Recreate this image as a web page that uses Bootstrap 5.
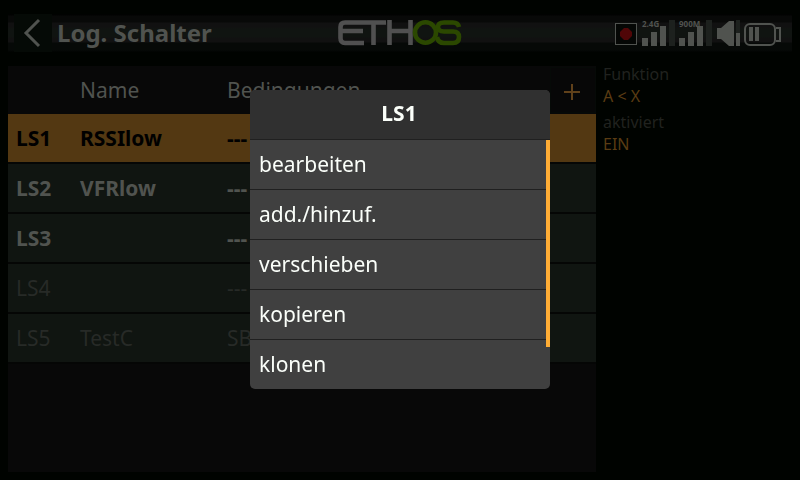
<!DOCTYPE html>
<html lang="de">
<head>
<meta charset="utf-8">
<meta name="viewport" content="width=device-width, initial-scale=1">
<title>Log. Schalter</title>
<link href="https://cdn.jsdelivr.net/npm/bootstrap@5.3.0/dist/css/bootstrap.min.css" rel="stylesheet">
<style>
  body { background: #000300; color: #50534f; font-family: "Noto Sans", sans-serif; font-size: 21px; line-height: 24px; }
  .topbar { margin-top: 14px; height: 38px; padding-left: 6px; padding-right: 7px;
    background: linear-gradient(#010201 0 1px, #080908 2px 8px, #111111 9px 13px, #101411 15px 23px, #111111 24px 28px, #060907 29px 36px, #010301); }
  .side { flex: 1 1 0; }
  .back { width: 38px; height: 38px; background: #050a06; }
  .title { font-size: 24px; line-height: 38px; margin-left: 5px; }
  .status { gap: 4px; }
  .signal { font-family: "Open Sans", sans-serif; font-size: 8px; font-weight: 700; overflow: visible; }
  .content { padding: 14px 8px 8px; }
  .listing { background: #080808; }
  .info { padding-left: 7px; font-size: 16px; line-height: 22px; margin-top: -3px; }
  .info dt { font-weight: 400; color: #20221f; }
  .info dd { color: #5a3c13; margin-bottom: 4px; }
  .switches { table-layout: fixed; border-collapse: separate; border-spacing: 0; }
  .switches th, .switches td { padding: 0 0 1px 8px; height: 50px; border-bottom: 2px solid #050605; vertical-align: middle; white-space: nowrap; background: #101511; }
  .switches thead th { height: 48px; border: 0; background: #080808; font-weight: 400; }
  .switches .selected > * { background: #533812; color: #000; }
  .switches .off > * { font-weight: 400; color: #272a27; }
  .switches thead .addcell { padding: 0; }
  .add { width: 46px; height: 46px; background: #070707; border: 1px solid #060a07; }
  .c-id { width: 64px; } .c-name { width: 147px; } .c-add { width: 46px; }
  .overlay { padding-bottom: 1px; }
  .menu { width: 300px; border-radius: 5px; overflow: hidden; background: #404040; color: #fbfffa; }
  .menu h2 { font-size: 21px; line-height: 47px; height: 49px; background: #303030; padding-right: 2px; }
  .menu button { height: 50px; padding: 0 9px 2px; border: 0; border-top: 1px solid #202020; background: none; color: inherit; }
  .thumb { top: 50px; right: 0; width: 4px; height: 207px; background: #ffad35; }
</style>
<script src="https://cdn.jsdelivr.net/npm/bootstrap@5.3.0/dist/js/bootstrap.bundle.min.js"></script>
</head>
<body class="min-vh-100 d-flex flex-column">
<header class="topbar mx-2 d-flex align-items-center">
  <div class="side d-flex align-items-center">
    <button class="back border-0 p-0 d-flex" aria-label="Zurück">
      <svg width="38" height="38" fill="none" stroke="#50534f" stroke-width="3"><path d="M25 6 12 19 25 32"/></svg>
    </button>
    <h1 class="title fw-bold mb-0 text-nowrap">Log. Schalter</h1>
  </div>
  <svg width="124" height="26" viewBox="0 0 124 26" fill="none" stroke-width="4.6" role="img" aria-label="ETHOS">
    <g stroke="#505050">
      <path d="M48 2.500H7Q2.500 2.500 2.500 7V18Q2.500 23 7 23H26M3 11H25M35.500 2.500V25M51.500 0V25M51.500 11H72M72.500 0V25"/>
    </g>
    <g stroke="#2b4800">
      <ellipse cx="87.500" cy="12.500" rx="10.500" ry="10.200"/>
      <path d="M121 7Q120 2.500 115 2.500H106Q100 2.500 100 7Q100 11.500 106 11.500H115Q121 11.500 121 17Q121 23 115 23H106Q100 23 99 17"/>
    </g>
  </svg>
  <div class="side status d-flex justify-content-end">
    <svg width="23" height="26" role="img" aria-label="Aufnahme"><rect x=".5" y="3.500" width="21" height="21" fill="#050705" stroke="#50534f"/><path d="M9 8H13L17 12V16L13 20H9L5 16V12Z" fill="#500607"/></svg>
    <svg class="signal" width="33" height="26" fill="#50534f"><text x="0" y="7">2.4G</text><path d="M0 18h6v8H0zM9 12h6v14H9zM18 6h6v20h-6z"/><path fill="#1d211e" d="M27 0h6v26h-6z"/></svg>
    <svg class="signal" width="33" height="26" fill="#50534f"><text x="0" y="7">900M</text><path d="M0 18h6v8H0zM9 12h6v14H9zM18 6h6v20h-6z"/><path fill="#1d211e" d="M27 0h6v26h-6z"/></svg>
    <svg width="24" height="26" fill="#50534f" role="img" aria-label="Lautstärke"><path d="M1 8H5L13 1H18V26H13L5 19H1Z"/><path fill="#1d211e" d="M20 0h4v13h-4z"/><path d="M20 13h4v13h-4z"/></svg>
    <svg class="me-1" width="37" height="26" fill="none" stroke="#50534f" stroke-width="2" role="img" aria-label="Akku"><rect x="1" y="4" width="30" height="21" rx="5"/><path d="M32 8H36V21H32"/><path fill="#50534f" stroke="none" d="M5 7h4v14H5zM11 7h4v14h-4z"/></svg>
  </div>
</header>
<main class="content flex-grow-1 d-flex">
  <section class="listing w-75">
    <table class="switches w-100">
      <colgroup><col class="c-id"><col class="c-name"><col><col class="c-add"></colgroup>
      <thead><tr><th></th><th>Name</th><th>Bedingungen</th><th class="addcell"><button class="add p-0 d-flex" aria-label="Hinzufügen"><svg width="44" height="44" stroke="#60411a" stroke-width="2"><path d="M13 24H29M21 16V32"/></svg></button></th></tr></thead>
      <tbody>
        <tr class="selected fw-bold"><th>LS1</th><td>RSSIlow</td><td colspan="2">---</td></tr>
        <tr class="fw-bold"><th>LS2</th><td>VFRlow</td><td colspan="2">---</td></tr>
        <tr class="fw-bold"><th>LS3</th><td></td><td colspan="2">---</td></tr>
        <tr class="off"><th>LS4</th><td></td><td colspan="2">---</td></tr>
        <tr class="off"><th>LS5</th><td>TestC</td><td colspan="2">SB</td></tr>
      </tbody>
    </table>
  </section>
  <dl class="info w-25 mb-0">
    <dt>Funktion</dt><dd>A &lt; X</dd>
    <dt>aktiviert</dt><dd>EIN</dd>
  </dl>
</main>
<div class="overlay position-fixed top-0 start-0 w-100 h-100 d-flex align-items-center justify-content-center">
  <div class="menu position-relative" role="dialog" aria-labelledby="menu-title">
    <h2 id="menu-title" class="fw-bold text-center mb-0">LS1</h2>
    <div class="d-flex flex-column">
      <button class="text-start">bearbeiten</button>
      <button class="text-start">add./hinzuf.</button>
      <button class="text-start">verschieben</button>
      <button class="text-start">kopieren</button>
      <button class="text-start">klonen</button>
    </div>
    <div class="thumb position-absolute"></div>
  </div>
</div>
</body>
</html>
